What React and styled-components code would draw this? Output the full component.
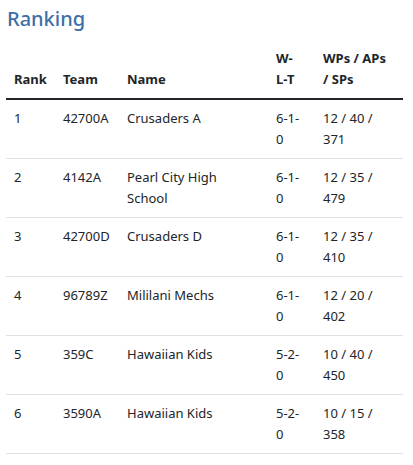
import React from 'react';
import styled, { createGlobalStyle } from 'styled-components';

const GlobalStyle = createGlobalStyle`
  body {
    margin: 0;
    background: #fff;
    font-family: "Segoe UI", "Noto Sans", "Open Sans", sans-serif;
    color: #212529;
  }
`;

const Page = styled.div`
  padding: 4px 10px 0 6px;
`;

const Title = styled.h2`
  margin: 0 0 6px 1px;
  font-size: 20px;
  font-weight: 500;
  line-height: 30px;
  color: #3d6fa8;
`;

const Table = styled.table`
  width: 397px;
  border-collapse: collapse;
  table-layout: fixed;
  font-size: 13px;
  line-height: 21px;
`;

const Th = styled.th`
  box-sizing: border-box;
  width: ${({ $w }) => $w}px;
  text-align: left;
  vertical-align: bottom;
  padding: 8px ${({ $pr }) => $pr}px 8px 8px;
  font-weight: 700;
  border-bottom: 2px solid #212529;
`;

const Tr = styled.tr`
  border-bottom: 1px solid #dee2e6;
`;

const Td = styled.td`
  vertical-align: top;
  padding: 8px ${({ $pr }) => $pr}px 8px 8px;
`;

const cols = [
  { label: 'Rank', w: 49, pr: 8 },
  { label: 'Team', w: 64, pr: 8 },
  { label: 'Name', w: 149, pr: 8 },
  { label: 'W-L-T', w: 47, pr: 14 },
  { label: 'WPs / APs / SPs', w: 88, pr: 12 },
];

const rows = [
  [1, '42700A', 'Crusaders A', '6-1-0', '12 / 40 / 371'],
  [2, '4142A', 'Pearl City High School', '6-1-0', '12 / 35 / 479'],
  [3, '42700D', 'Crusaders D', '6-1-0', '12 / 35 / 410'],
  [4, '96789Z', 'Mililani Mechs', '6-1-0', '12 / 20 / 402'],
  [5, '359C', 'Hawaiian Kids', '5-2-0', '10 / 40 / 450'],
  [6, '3590A', 'Hawaiian Kids', '5-2-0', '10 / 15 / 358'],
];

const App = () => (
  <Page>
    <GlobalStyle />
    <Title>Ranking</Title>
    <Table>
      <thead>
        <tr>
          {cols.map((c) => (
            <Th key={c.label} $w={c.w} $pr={c.pr}>{c.label}</Th>
          ))}
        </tr>
      </thead>
      <tbody>
        {rows.map((r) => (
          <Tr key={r[0]}>
            {r.map((c, i) => (
              <Td key={i} $pr={cols[i].pr}>{c}</Td>
            ))}
          </Tr>
        ))}
      </tbody>
    </Table>
  </Page>
);

export default App;
